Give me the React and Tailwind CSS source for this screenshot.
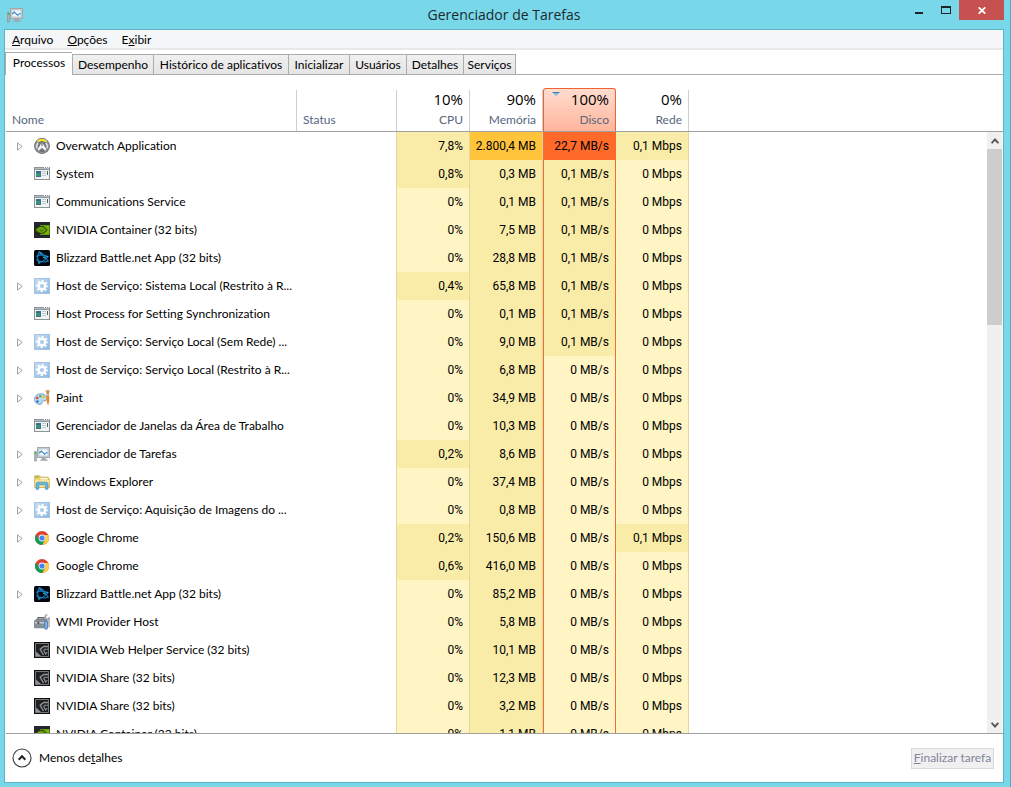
import React from "react";

function OverwatchIcon() {
  return (
    <svg width="16" height="16" viewBox="0 0 16 16" className="shrink-0" aria-hidden="true">
      <circle cx="8" cy="8" r="7.900" fill="#5b5d60" />
      <circle cx="8" cy="8" r="6.600" fill="none" stroke="#8d8f92" strokeWidth="1.600" />
      <circle cx="8" cy="8" r="5.300" fill="#75787b" />
      <path d="M2.700 3.100A7.300 7.300 0 0 1 13.300 3.100L11.700 4.600A5.200 5.200 0 0 0 4.300 4.600Z" fill="#f3df3c" />
      <path d="M4 5A5 5 0 0 0 3.300 10.400M12 5A5 5 0 0 1 12.700 10.400" fill="none" stroke="#f5f5f6" strokeWidth="1.300" />
      <path d="M7.400 5 3.600 11.600A5.300 5.300 0 0 0 4.800 12.700L8 9.700l3.200 3A5.300 5.300 0 0 0 12.400 11.600L8.600 5V8.200H7.400Z" fill="#f5f5f6" />
    </svg>
  );
}

function WindowIcon() {
  return (
    <svg width="16" height="16" viewBox="0 0 16 16" shapeRendering="crispEdges" className="shrink-0" aria-hidden="true">
      <rect x="0" y="1" width="16" height="13" fill="#8f9499" />
      <rect x="1" y="2" width="14" height="1" fill="#b4bac0" />
      <path d="M10 1h1v1h-1zM12 1h1v1h-1zM14 1h1v1h-1z" fill="#f4f6f8" />
      <rect x="1" y="4" width="14" height="9" fill="#f1f3f4" />
      <rect x="2" y="5" width="5" height="6" fill="#3d6d93" />
      <rect x="2" y="7" width="4" height="3" fill="#3a9670" />
      <path d="M8 5h4v1H8zM8 7h4v1H8zM8 9h4v1H8z" fill="#c3c8cc" />
      <rect x="13" y="5" width="1" height="4" fill="#3b6a58" />
    </svg>
  );
}

function NvidiaIcon() {
  return (
    <svg width="16" height="16" viewBox="0 0 16 16" className="shrink-0" aria-hidden="true">
      <rect width="16" height="16" fill="#23262f" />
      <path d="M6 3.200h9.500v9.600H6z" fill="#76b900" />
      <path d="M1 8C2.600 5.400 4.800 4.300 7.200 4.300c2.600 0 4.600 1.500 6 3.700-1.600 2.200-3.600 3.500-6 3.500C4.600 11.500 2.500 10.300 1 8Z" fill="#4c7708" />
      <path d="M1 8C2.600 5.400 4.800 4.300 7.200 4.300c2.600 0 4.600 1.500 6 3.700-1.600 2.200-3.600 3.500-6 3.500C4.600 11.500 2.500 10.300 1 8Z" fill="none" stroke="#1e2a0a" strokeWidth=".8" />
      <path d="M3 8.100c1.200-1.700 2.700-2.400 4.300-2.400 1.700 0 2.900 1 3.900 2.400-1 1.300-2.300 2-3.700 2-1.500 0-2.500-.8-2.900-2 .7-.9 1.500-1.300 2.500-1.200 1 .1 1.600.6 2 1.300" fill="none" stroke="#8ccc14" strokeWidth=".8" />
    </svg>
  );
}

function BattleNetIcon() {
  return (
    <svg width="16" height="16" viewBox="0 0 16 16" className="shrink-0" aria-hidden="true">
      <rect width="16" height="16" rx="1.500" fill="#05080f" />
      <g fill="none" stroke="#1379b8" strokeWidth="1.200" strokeLinejoin="round">
        <path d="M5 13.600C3.200 10.200 3.400 4.600 5.300 1.900c2.500.6 4.900 3.400 6.400 7.100" />
        <path d="M2 6.600C5 4.400 9.800 4.400 14.200 6.500c-1.700 2.300-4.600 4.700-7.900 6" />
        <path d="M2.300 9.600c3.300 2.300 7.500 3 12 1.600C12.600 8.300 9.300 5.300 5.200 3.700" />
      </g>
      <path d="M5.300 1.900 7.500 4.200M14.200 6.500l-3 .6M5 13.600l1.300-2.500M9 7l1.500 1.500" stroke="#55b8ee" strokeWidth=".8" />
    </svg>
  );
}

function GearIcon() {
  return (
    <svg width="16" height="16" viewBox="0 0 16 16" className="shrink-0" aria-hidden="true">
      <defs>
        <linearGradient id="gear-bg" x1="0" y1="0" x2="1" y2="1">
          <stop offset="0" stopColor="#c6def3" />
          <stop offset="1" stopColor="#8fb8e0" />
        </linearGradient>
      </defs>
      <rect x=".5" y=".5" width="15" height="15" fill="url(#gear-bg)" stroke="#a4c3e2" />
      <circle cx="8" cy="8" r="5" fill="none" stroke="#fff" strokeWidth="2.200" strokeDasharray="2 1.927" strokeDashoffset="1" />
      <circle cx="8" cy="8" r="3.300" fill="none" stroke="#fff" strokeWidth="2.400" />
    </svg>
  );
}

function PaintIcon() {
  return (
    <svg width="16" height="16" viewBox="0 0 16 16" className="shrink-0" aria-hidden="true">
      <path d="M6.500 3.800C3 4 .5 6.200.5 9.300c0 3.200 2.500 5 5.500 5 1.700 0 2.200-.8 2-1.700-.2-1 .3-1.600 1.500-1.600 2 0 3.300-.7 3.300-2.600 0-2.800-2.800-4.800-6.300-4.600Z" fill="#b9dcf2" stroke="#5a93bf" strokeWidth=".8" />
      <circle cx="3.200" cy="8" r="1.300" fill="#d8443c" />
      <circle cx="6.300" cy="6.200" r="1.200" fill="#4fae3f" />
      <circle cx="9.600" cy="6.700" r="1.200" fill="#f3b62e" />
      <circle cx="3.500" cy="11.400" r="1.200" fill="#3a62b8" />
      <path d="M11.500.3h4.300l-.9 4h-2.200z" fill="#c99358" />
      <path d="M12.600 4.300h2.300v1.800h-2.300z" fill="#9ba1a7" />
      <path d="M12.400 6h2.800c.4 3.500.1 6.600-1.100 9.500-1.500-2.800-2-6-1.700-9.500Z" fill="#ee8a25" />
    </svg>
  );
}

function TaskManagerIcon() {
  return (
    <svg width="16" height="16" viewBox="0 0 16 16" className="shrink-0" aria-hidden="true">
      <rect x="3.500" y="1.500" width="12" height="10" fill="#d3d6d8" stroke="#a3a7aa" />
      <rect x="5" y="3" width="9" height="7" fill="#f3faff" stroke="#9db2c0" strokeWidth=".6" />
      <path d="M5.300 7 7.300 5l3.400 3.300 1.600-1.600h1.500" fill="none" stroke="#2b86c5" strokeWidth="1.100" />
      <path d="M8 12h3.500v1.300h2v1.400H6.500v-1.400H8z" fill="#a3a7aa" />
      <path d="M.4 5.500h2v9.500h-2z" fill="#b3b8bb" stroke="#84898d" strokeWidth=".6" />
      <rect x=".9" y="6" width="1.300" height="2" fill="#35c33d" />
    </svg>
  );
}

function ExplorerIcon() {
  return (
    <svg width="16" height="16" viewBox="0 0 16 16" className="shrink-0" aria-hidden="true">
      <path d="M.7 13.500V1.800h5l1.200 1.400h7.400v2H16l-.7 8.300z" fill="#f3d474" stroke="#c7a03d" strokeWidth=".7" />
      <path d="M1.300 2.500h4v1.200h-4z" fill="#7fb64b" />
      <path d="M6.500 4h7.200v1.300H6.500z" fill="#fffbe8" />
      <path d="M1 6h14.300l-.4 7H1z" fill="#fae59b" />
      <path d="M2 15.300V9.800C2.200 8.700 3 8.200 4 8.200h8.200c1 0 1.700.6 1.800 1.600v5.500h-2.600v-3.500c0-.7-.3-1-1-1H5.700c-.7 0-1 .3-1 1v3.500z" fill="#67b8e0" stroke="#3982b0" strokeWidth=".6" />
    </svg>
  );
}

function ChromeIcon() {
  return (
    <svg width="16" height="16" viewBox="0 0 16 16" className="shrink-0" aria-hidden="true">
      <circle cx="8" cy="8" r="7" fill="#db4437" />
      <path d="M14.300 5A7 7 0 0 1 8 15l3-5.400L10.500 5Z" fill="#ffcd40" />
      <path d="M1.940 4.500A7 7 0 0 0 8 15l3-5.300L8 11.200 5.100 9.700Z" fill="#0f9d58" />
      <circle cx="8" cy="8" r="3.400" fill="#f4f6f8" />
      <circle cx="8" cy="8" r="2.600" fill="#4285f4" />
    </svg>
  );
}

function ToolboxIcon() {
  return (
    <svg width="16" height="16" viewBox="0 0 16 16" className="shrink-0" aria-hidden="true">
      <path d="M4 5.500V3.700h5.500v1.800" fill="none" stroke="#60666c" strokeWidth="1.200" />
      <path d="M.4 7 3 5h10v8.800H.4z" fill="#87919a" stroke="#5f666d" strokeWidth=".7" />
      <path d="M.8 8.300h12v1.100H.8z" fill="#dce0e3" />
      <path d="M3.500 7.600h1.700v2.600H3.500z" fill="#444a50" />
      <path d="M9 5.500 12 2.500" stroke="#8d949a" strokeWidth="1.600" />
      <path d="M13.400.8A2.200 2.200 0 1 0 15.600 3" fill="none" stroke="#a3a9af" strokeWidth="1.500" />
      <path d="M10.700 7.200h2.800v7c0 1.600-2.800 1.600-2.800 0z" fill="#86b0e6" stroke="#416faf" strokeWidth=".7" />
      <path d="M15 5.500v8" stroke="#777f86" strokeWidth="1" />
    </svg>
  );
}

function NvidiaDarkIcon() {
  return (
    <svg width="16" height="16" viewBox="0 0 16 16" className="shrink-0" aria-hidden="true">
      <rect x=".5" y=".5" width="15" height="15" fill="#1f2021" stroke="#0e0f10" />
      <path d="M1.500 14.500V1.500h13v13z" fill="none" stroke="#77797b" strokeWidth="1" />
      <path d="M2 14V9.500l5 4.500z" fill="#909295" />
      <path d="M14 4.500H9.800L6.200 7.300l3.300 5.700" fill="none" stroke="#909295" strokeWidth="1.400" />
      <path d="M14 7.200h-3.200L9.800 8.500l1.900 3.500 1.500-1.800" fill="none" stroke="#909295" strokeWidth="1.100" />
    </svg>
  );
}

const icons = {
  overwatch: OverwatchIcon,
  window: WindowIcon,
  nvidia: NvidiaIcon,
  battlenet: BattleNetIcon,
  gear: GearIcon,
  paint: PaintIcon,
  taskmgr: TaskManagerIcon,
  explorer: ExplorerIcon,
  chrome: ChromeIcon,
  toolbox: ToolboxIcon,
  nvidiaDark: NvidiaDarkIcon,
};

const heat = ["bg-[#fff4c4]", "bg-[#f9eca8]", "bg-[#ffc43c]", "bg-[#ff6a2a]"];

// [name, icon, expandable, cpu, memory, disk, network, heat level of each value]
const processes = [
  ["Overwatch Application", "overwatch", true, "7,8%", "2.800,4 MB", "22,7 MB/s", "0,1 Mbps", [1, 2, 3, 1]],
  ["System", "window", false, "0,8%", "0,3 MB", "0,1 MB/s", "0 Mbps", [1, 1, 1, 0]],
  ["Communications Service", "window", false, "0%", "0,1 MB", "0,1 MB/s", "0 Mbps", [0, 1, 1, 0]],
  ["NVIDIA Container (32 bits)", "nvidia", false, "0%", "7,5 MB", "0,1 MB/s", "0 Mbps", [0, 1, 1, 0]],
  ["Blizzard Battle.net App (32 bits)", "battlenet", false, "0%", "28,8 MB", "0,1 MB/s", "0 Mbps", [0, 1, 1, 0]],
  ["Host de Serviço: Sistema Local (Restrito à R...", "gear", true, "0,4%", "65,8 MB", "0,1 MB/s", "0 Mbps", [1, 1, 1, 0]],
  ["Host Process for Setting Synchronization", "window", false, "0%", "0,1 MB", "0,1 MB/s", "0 Mbps", [0, 1, 1, 0]],
  ["Host de Serviço: Serviço Local (Sem Rede) ...", "gear", true, "0%", "9,0 MB", "0,1 MB/s", "0 Mbps", [0, 1, 1, 0]],
  ["Host de Serviço: Serviço Local (Restrito à R...", "gear", true, "0%", "6,8 MB", "0 MB/s", "0 Mbps", [0, 1, 0, 0]],
  ["Paint", "paint", true, "0%", "34,9 MB", "0 MB/s", "0 Mbps", [0, 1, 0, 0]],
  ["Gerenciador de Janelas da Área de Trabalho", "window", false, "0%", "10,3 MB", "0 MB/s", "0 Mbps", [0, 1, 0, 0]],
  ["Gerenciador de Tarefas", "taskmgr", true, "0,2%", "8,6 MB", "0 MB/s", "0 Mbps", [1, 1, 0, 0]],
  ["Windows Explorer", "explorer", true, "0%", "37,4 MB", "0 MB/s", "0 Mbps", [0, 1, 0, 0]],
  ["Host de Serviço: Aquisição de Imagens do ...", "gear", true, "0%", "0,8 MB", "0 MB/s", "0 Mbps", [0, 1, 0, 0]],
  ["Google Chrome", "chrome", true, "0,2%", "150,6 MB", "0 MB/s", "0,1 Mbps", [1, 1, 0, 1]],
  ["Google Chrome", "chrome", false, "0,6%", "416,0 MB", "0 MB/s", "0 Mbps", [1, 1, 0, 0]],
  ["Blizzard Battle.net App (32 bits)", "battlenet", true, "0%", "85,2 MB", "0 MB/s", "0 Mbps", [0, 1, 0, 0]],
  ["WMI Provider Host", "toolbox", false, "0%", "5,8 MB", "0 MB/s", "0 Mbps", [0, 1, 0, 0]],
  ["NVIDIA Web Helper Service (32 bits)", "nvidiaDark", false, "0%", "10,1 MB", "0 MB/s", "0 Mbps", [0, 1, 0, 0]],
  ["NVIDIA Share (32 bits)", "nvidiaDark", false, "0%", "12,3 MB", "0 MB/s", "0 Mbps", [0, 1, 0, 0]],
  ["NVIDIA Share (32 bits)", "nvidiaDark", false, "0%", "3,2 MB", "0 MB/s", "0 Mbps", [0, 1, 0, 0]],
  ["NVIDIA Container (32 bits)", "nvidia", false, "0%", "1,1 MB", "0 MB/s", "0 Mbps", [0, 1, 0, 0]],
];

const cellBorders = [
  "border-l border-[#e9d5a0]",
  "border-x border-[#e9d5a0]",
  "border-x border-[#ee7030]",
  "border-r border-[#e9d5a0]",
];

const tabs = [
  ["Desempenho", "w-[81px]"],
  ["Histórico de aplicativos", "w-[135px]"],
  ["Inicializar", "w-[61px]"],
  ["Usuários", "w-[57px]"],
  ["Detalhes", "w-[57px]"],
  ["Serviços", "w-[52px]"],
];

function TitleBar() {
  return (
    <header className="grid h-[29px] shrink-0 grid-cols-[1fr_auto_1fr]">
      <div className="pl-[3px] pt-[7px]">
        <TaskManagerIcon />
      </div>
      <h1 className="pt-1 font-['Open_Sans',sans-serif] text-[14px] leading-[22px] text-[#1c2a30]">Gerenciador de Tarefas</h1>
      <div className="flex h-5 justify-end">
        <button aria-label="Minimizar" className="flex w-[27px] items-center justify-center pt-[5px]">
          <svg width="8" height="2" viewBox="0 0 8 2">
            <path d="M0 0h8v2H0z" fill="#1f2426" />
          </svg>
        </button>
        <button aria-label="Maximizar" className="flex w-[27px] items-center justify-center">
          <svg width="10" height="8" viewBox="0 0 10 8" shapeRendering="crispEdges">
            <path d="M0 0h10v8H0zM1 2v5h8V2z" fill="#1f2426" fillRule="evenodd" />
          </svg>
        </button>
        <button aria-label="Fechar" className="flex w-[45px] items-center justify-center bg-[#c75050]">
          <svg width="8" height="7" viewBox="0 0 8 7">
            <path d="M.7.3l6.600 6.400M7.300.3.7 6.700" stroke="#fff" strokeWidth="1.700" />
          </svg>
        </button>
      </div>
    </header>
  );
}

function MenuBar() {
  return (
    <nav className="flex h-5 shrink-0 gap-[14px] border-b-2 border-[#e9e9ea] bg-[#f5f6f7] pl-[7px] leading-5">
      <button><u>A</u>rquivo</button>
      <button><u>O</u>pções</button>
      <button>E<u>x</u>ibir</button>
    </nav>
  );
}

function Tabs() {
  return (
    <div role="tablist" className="flex h-[25px] shrink-0 items-end">
      <button role="tab" aria-selected="true" className="h-[23px] w-[67px] border-l border-t border-[#acacac] bg-white pb-[3px] leading-[19px]">
        Processos
      </button>
      <div className="flex h-[21px] grow border-b border-l border-[#acacac]">
        {tabs.map(([label, width]) => (
          <button
            key={label}
            role="tab"
            aria-selected="false"
            className={`${width} whitespace-nowrap border-r border-t border-[#acacac] bg-linear-to-b from-[#f0f0f0] to-[#e5e5e5] leading-[19px]`}
          >
            {label}
          </button>
        ))}
      </div>
    </div>
  );
}

function UsageHeader({ total, label, box, sorted }) {
  return (
    <th scope="col" className="border-b border-[#a0a0a0] p-0 align-bottom font-normal">
      <button className={`flex w-full flex-col items-end justify-end pb-px pr-[6px] ${box}`}>
        <span className="flex w-full items-start justify-end">
          {sorted && (
            <svg width="8" height="5" viewBox="0 0 8 5" className="mr-auto ml-2 mt-1" aria-hidden="true">
              <path d="M0 0h8L4 4.500z" fill="#8cc8e6" />
              <path d="M0 0h8L6.500 1.200H2z" fill="#3f7fa8" />
            </svg>
          )}
          <span className="font-['Open_Sans',sans-serif] text-[15px] leading-[22px]">{total}</span>
        </span>
        <span className="leading-5 text-[#56677f]">{label}</span>
      </button>
    </th>
  );
}

function ProcessTable() {
  return (
    <table className="w-full table-fixed border-separate border-spacing-0">
      <colgroup>
        <col className="w-[291px]" />
        <col className="w-[99px]" />
        <col className="w-[73px]" />
        <col className="w-[74px]" />
        <col className="w-[73px]" />
        <col className="w-[73px]" />
        <col />
      </colgroup>
      <thead>
        <tr className="h-[57px]">
          <th scope="col" className="border-b border-[#a0a0a0] p-0 align-bottom font-normal">
            <button className="flex h-[41px] w-full items-end border-r border-[#cfcfcf] pb-px pl-[6px] leading-5 text-[#56677f]">
              Nome
            </button>
          </th>
          <th scope="col" className="border-b border-[#a0a0a0] p-0 align-bottom font-normal">
            <button className="flex h-[41px] w-full items-end pb-px pl-[6px] leading-5 text-[#56677f]">Status</button>
          </th>
          <UsageHeader total="10%" label="CPU" box="h-[41px] border-l border-[#cfcfcf]" />
          <UsageHeader total="90%" label="Memória" box="h-[41px] border-x border-[#cfcfcf]" />
          <UsageHeader
            total="100%"
            label="Disco"
            sorted
            box="h-[43px] rounded-t-[3px] border-x border-t border-[#f0652f] bg-linear-to-b from-[#ffdccf] to-[#ffb59b]"
          />
          <UsageHeader total="0%" label="Rede" box="h-[41px] border-r border-[#cfcfcf]" />
          <td className="border-b border-[#a0a0a0] p-0" />
        </tr>
      </thead>
      <tbody>
        {processes.map(([name, icon, expandable, cpu, memory, disk, network, levels], i) => {
          const Icon = icons[icon];
          return (
            <tr key={i} className="h-7">
              <td className="p-0">
                <div className="flex items-center">
                  <div className="flex w-7 shrink-0 pl-[11px]">
                    {expandable && (
                      <button aria-label={`Expandir ${name}`}>
                        <svg width="6" height="9" viewBox="0 0 6 9">
                          <path d="M.5.900 5.200 4.500.5 8.100z" fill="#fff" stroke="#989898" strokeWidth=".9" />
                        </svg>
                      </button>
                    )}
                  </div>
                  <Icon />
                  <span className="whitespace-nowrap pl-[6px]">{name}</span>
                </div>
              </td>
              <td className="p-0" />
              {[cpu, memory, disk, network].map((value, c) => (
                <td key={c} className={`whitespace-nowrap py-0 pl-0 pr-[6px] text-right font-['Roboto',sans-serif] ${cellBorders[c]} ${heat[levels[c]]}`}>
                  {value}
                </td>
              ))}
              <td className="p-0" />
            </tr>
          );
        })}
      </tbody>
    </table>
  );
}

function ScrollBar() {
  return (
    <div className="flex w-4 shrink-0 flex-col">
      <div className="h-[57px] shrink-0 border-b border-[#a0a0a0]" />
      <div className="mr-px flex grow flex-col bg-[#f0f0f0]">
        <button aria-label="Rolar para cima" className="flex h-[17px] items-center justify-center">
          <svg width="8" height="6" viewBox="0 0 8 6">
            <path d="M.6 5.200 4 1.500l3.400 3.700" fill="none" stroke="#555" strokeWidth="1.900" />
          </svg>
        </button>
        <div className="h-[176px] bg-[#cdcdcd]" />
        <button aria-label="Rolar para baixo" className="mt-auto flex h-[17px] items-center justify-center">
          <svg width="8" height="6" viewBox="0 0 8 6">
            <path d="M.6.800 4 4.500 7.400.800" fill="none" stroke="#555" strokeWidth="1.900" />
          </svg>
        </button>
      </div>
    </div>
  );
}

function Footer() {
  return (
    <footer className="flex h-12 shrink-0 items-center justify-between pl-[7px] pr-[9px]">
      <button className="flex items-center gap-[7px]">
        <svg width="20" height="20" viewBox="0 0 20 20" aria-hidden="true">
          <circle cx="10" cy="10" r="9" fill="#fff" stroke="#3c3c3c" strokeWidth="1.100" />
          <path d="M6.700 11.700 10 8.300l3.300 3.400" fill="none" stroke="#222" strokeWidth="2" />
        </svg>
        <span>Menos de<u>t</u>alhes</span>
      </button>
      <button disabled className="h-[21px] w-[83px] whitespace-nowrap border border-[#d9d9d9] bg-[#f0f0f0] leading-[18px] text-[#83839b]">
        <u>F</u>inalizar tarefa
      </button>
    </footer>
  );
}

export default function App() {
  return (
    <div className="flex h-screen flex-col border-r border-[#55a9b8] bg-[#78d7e8] pb-1 pl-1 pr-[6px] font-['Lato','Open_Sans',sans-serif] text-[12px] text-black [font-variant-ligatures:none]">
      <TitleBar />
      <main className="flex min-h-0 grow flex-col border border-[#5fb5c3] bg-white">
        <MenuBar />
        <Tabs />
        <section aria-label="Processos" className="ml-px flex min-h-0 grow border-b border-[#a0a0a0]">
          <div className="min-w-0 grow overflow-hidden">
            <ProcessTable />
          </div>
          <ScrollBar />
        </section>
        <Footer />
      </main>
    </div>
  );
}
